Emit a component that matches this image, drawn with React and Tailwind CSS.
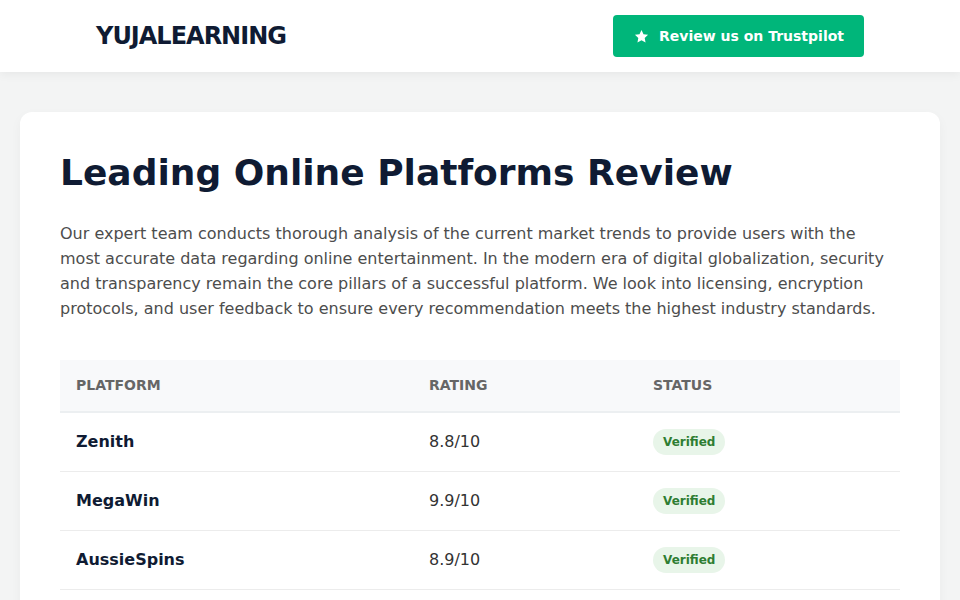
import React from "react";

const rows = [
  { name: "Zenith", rating: "8.8/10" },
  { name: "MegaWin", rating: "9.9/10" },
  { name: "AussieSpins", rating: "8.9/10" },
];

function Star() {
  return (
    <svg width="15" height="15" viewBox="0 0 24 24" fill="currentColor" aria-hidden="true">
      <path d="M12 1.5l3.2 6.8 7.3.9-5.4 5.1 1.4 7.3L12 18l-6.5 3.6 1.4-7.3-5.4-5.1 7.3-.9z" />
    </svg>
  );
}

export default function App() {
  return (
    <div className="min-h-screen bg-[#f3f4f4] text-[#0f1b33]" style={{ fontFamily: '"DejaVu Sans", sans-serif' }}>
      <header className="h-[72px] bg-white shadow-[0_2px_10px_rgba(0,0,0,0.06)] relative z-10">
        <div className="h-full px-[96px] flex items-center justify-between">
          <div className="text-[24px] font-bold tracking-[-1px] text-[#0f1b33]">YUJALEARNING</div>
          <a className="h-[42px] pl-[21px] pr-[20px] rounded-[4px] bg-[#00b67a] text-white flex items-center gap-[10px] text-[14px] font-bold">
            <Star />
            <span>Review us on Trustpilot</span>
          </a>
        </div>
      </header>

      <main className="px-[20px] pt-[40px]">
        <section className="bg-white rounded-[12px] shadow-[0_4px_12px_rgba(0,0,0,0.04)] px-[40px] pt-[40px] pb-[40px]">
          <h1 className="text-[36px] font-bold leading-[41px] text-[#0f1b33]">Leading Online Platforms Review</h1>
          <p className="mt-[28px] text-[16px] leading-[25px] text-[#4d4d4d]">
            Our expert team conducts thorough analysis of the current market trends to provide users with the most accurate data regarding online entertainment. In the modern era of digital globalization, security and transparency remain the core pillars of a successful platform. We look into licensing, encryption protocols, and user feedback to ensure every recommendation meets the highest industry standards.
          </p>

          <table className="mt-[39px] w-full border-collapse text-left">
            <thead>
              <tr className="bg-[#f8f9fa] border-b-2 border-[#eceff1]">
                <th className="w-[353px] px-[16px] h-[52px] text-[14px] font-bold uppercase text-[#666666]">Platform</th>
                <th className="w-[224px] px-[16px] h-[52px] text-[14px] font-bold uppercase text-[#666666]">Rating</th>
                <th className="px-[16px] h-[52px] text-[14px] font-bold uppercase text-[#666666]">Status</th>
              </tr>
            </thead>
            <tbody>
              {rows.map((r) => (
                <tr key={r.name} className="border-b border-[#ececec]">
                  <td className="px-[16px] h-[59px] text-[16px] font-bold text-[#0f1b33]">{r.name}</td>
                  <td className="px-[16px] h-[59px] text-[16px] text-[#333333]">{r.rating}</td>
                  <td className="px-[16px] h-[59px]">
                    <span className="inline-block rounded-full bg-[#e8f5e9] text-[#2e7d32] text-[12px] font-bold px-[10px] py-[5px] leading-[16px]">Verified</span>
                  </td>
                </tr>
              ))}
            </tbody>
          </table>
        </section>
      </main>
    </div>
  );
}
